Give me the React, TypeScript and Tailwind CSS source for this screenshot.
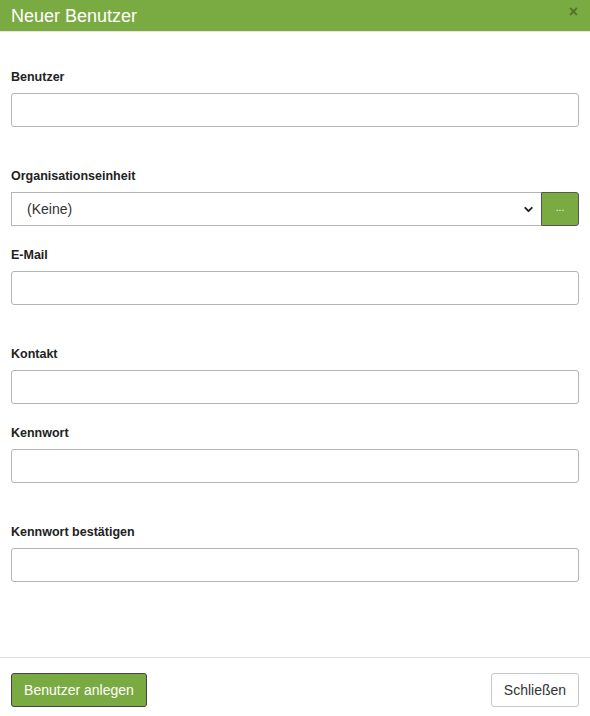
import { ChevronDown } from "lucide-react";

const font = { fontFamily: '"Liberation Sans", Arial, sans-serif' };

function Label({ children }: { children: string }) {
    return <div className="h-[19px] mb-[6px] text-[12.5px] leading-[19px] font-bold text-[#222]">{children}</div>;
}

function TextInput() {
    return <input type="text" className="block w-full h-[34px] border border-[#b5b5b5] rounded-[3px] bg-white outline-none" />;
}

export default function App() {
    return (
        <div className="w-[590px] h-[716px] bg-white flex flex-col" style={font}>
            <div className="h-[32px] bg-[#7aab42] flex items-center justify-between pl-[11px] pr-[12px] border-b border-[#e5e5e5]">
                <h3 className="text-[18px] text-white leading-none">Neuer Benutzer</h3>
                <span className="text-[16px] font-bold text-[#4f7328] leading-none -mt-[8px]">×</span>
            </div>

            <div className="flex-1 px-[11px] pt-[36px]">
                <Label>Benutzer</Label>
                <TextInput />

                <div className="mt-[40px]">
                    <Label>Organisationseinheit</Label>
                    <div className="flex h-[34px]">
                        <div className="flex-1 flex items-center justify-between border border-[#b5b5b5] border-r-0 pl-[15px] pr-[6px] text-[14px] text-[#333]">
                            <span>(Keine)</span>
                            <ChevronDown className="w-[13px] h-[13px] text-[#222]" strokeWidth={3.5} />
                        </div>
                        <button className="w-[38px] h-[34px] bg-[#7aab42] border border-[#555] rounded-r-[3px] text-white text-[10px] leading-none pb-[2px]">...</button>
                    </div>
                </div>

                <div className="mt-[20px]">
                    <Label>E-Mail</Label>
                    <TextInput />
                </div>

                <div className="mt-[40px]">
                    <Label>Kontakt</Label>
                    <TextInput />
                </div>

                <div className="mt-[20px]">
                    <Label>Kennwort</Label>
                    <TextInput />
                </div>

                <div className="mt-[40px]">
                    <Label>Kennwort bestätigen</Label>
                    <TextInput />
                </div>
            </div>

            <div className="h-[59px] border-t border-[#dcdcdc] px-[11px] pt-[15px] flex items-start justify-between">
                <button className="h-[34px] w-[136px] bg-[#7aab42] border border-[#444] rounded-[3px] text-white text-[14px]">Benutzer anlegen</button>
                <button className="h-[34px] w-[88px] bg-white border border-[#c8c8c8] rounded-[3px] text-[#333] text-[14px]">Schließen</button>
            </div>
        </div>
    );
}
